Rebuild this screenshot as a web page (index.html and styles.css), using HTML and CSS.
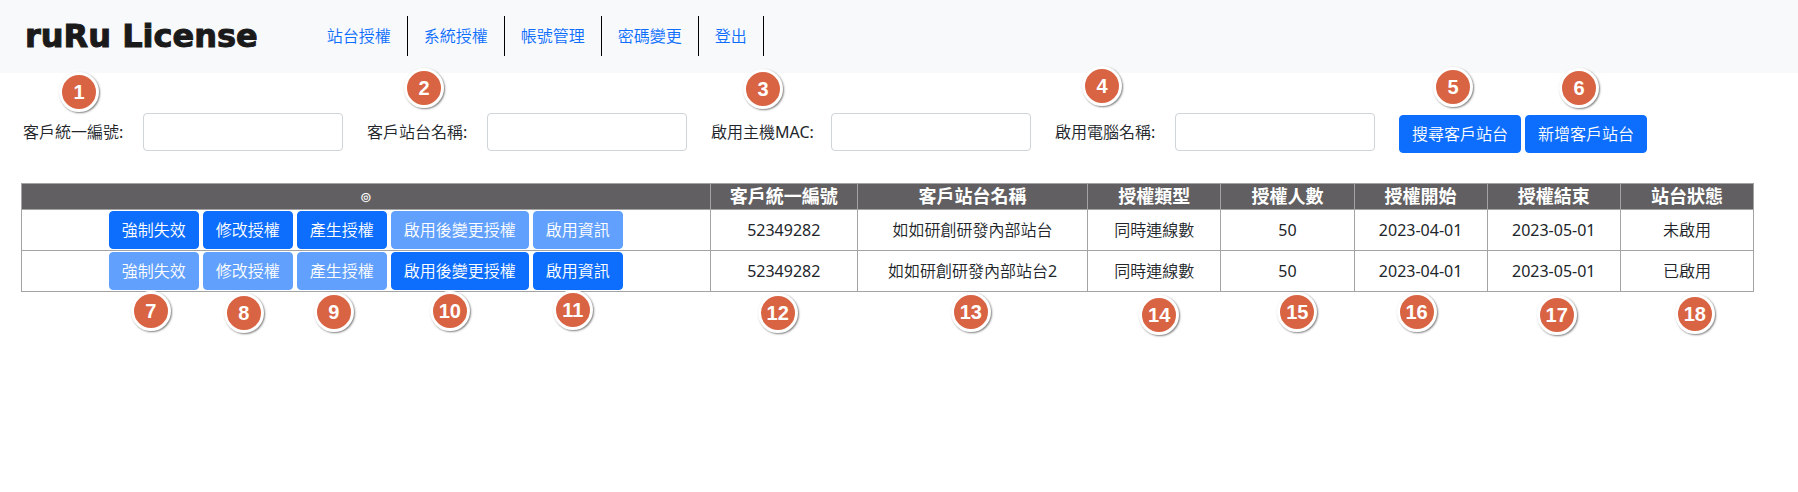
FILE: index.html
```html
<!DOCTYPE html>
<html lang="zh-Hant">
<head>
<meta charset="utf-8">
<meta name="viewport" content="width=device-width, initial-scale=1">
<title>ruRu License</title>
<link rel="stylesheet" href="styles.css">
</head>
<body>
<header class="topbar">
  <h1 class="brand">ruRu License</h1>
  <nav class="nav">
    <a class="nav-link" href="#">站台授權</a>
    <a class="nav-link" href="#">系統授權</a>
    <a class="nav-link" href="#">帳號管理</a>
    <a class="nav-link" href="#">密碼變更</a>
    <a class="nav-link" href="#">登出</a>
  </nav>
</header>
<main class="content">
  <form class="search">
    <div class="field"><label class="field-label" for="tax-id">客戶統一編號:</label><input class="field-input" id="tax-id" type="text"><span class="marker marker-1">1</span></div>
    <div class="field"><label class="field-label" for="site-name">客戶站台名稱:</label><input class="field-input" id="site-name" type="text"><span class="marker marker-2">2</span></div>
    <div class="field"><label class="field-label" for="host-mac">啟用主機MAC:</label><input class="field-input" id="host-mac" type="text"><span class="marker marker-3">3</span></div>
    <div class="field"><label class="field-label" for="pc-name">啟用電腦名稱:</label><input class="field-input" id="pc-name" type="text"><span class="marker marker-4">4</span></div>
    <div class="actions search-actions">
      <span class="slot"><button class="btn" type="button">搜尋客戶站台</button><span class="marker marker-5">5</span></span>
      <span class="slot"><button class="btn" type="button">新增客戶站台</button><span class="marker marker-6">6</span></span>
    </div>
  </form>
  <table class="sites">
    <colgroup>
      <col class="col-actions"><col class="col-id"><col class="col-name"><col><col><col><col><col>
    </colgroup>
    <thead>
      <tr><th class="mark">⊚</th><th>客戶統一編號</th><th>客戶站台名稱</th><th>授權類型</th><th>授權人數</th><th>授權開始</th><th>授權結束</th><th>站台狀態</th></tr>
    </thead>
    <tbody>
      <tr>
        <td>
          <div class="actions">
            <button class="btn" type="button">強制失效</button>
            <button class="btn" type="button">修改授權</button>
            <button class="btn" type="button">產生授權</button>
            <button class="btn" type="button" disabled>啟用後變更授權</button>
            <button class="btn" type="button" disabled>啟用資訊</button>
          </div>
        </td>
        <td>52349282</td><td>如如研創研發內部站台</td><td>同時連線數</td><td>50</td><td>2023-04-01</td><td>2023-05-01</td><td>未啟用</td>
      </tr>
      <tr>
        <td>
          <div class="actions">
            <span class="slot"><button class="btn" type="button" disabled>強制失效</button><span class="marker marker-7">7</span></span>
            <span class="slot"><button class="btn" type="button" disabled>修改授權</button><span class="marker marker-8">8</span></span>
            <span class="slot"><button class="btn" type="button" disabled>產生授權</button><span class="marker marker-9">9</span></span>
            <span class="slot"><button class="btn" type="button">啟用後變更授權</button><span class="marker marker-10">10</span></span>
            <span class="slot"><button class="btn" type="button">啟用資訊</button><span class="marker marker-11">11</span></span>
          </div>
        </td>
        <td>52349282<span class="marker marker-12">12</span></td>
        <td>如如研創研發內部站台2<span class="marker marker-13">13</span></td>
        <td>同時連線數<span class="marker marker-14">14</span></td>
        <td>50<span class="marker marker-15">15</span></td>
        <td>2023-04-01<span class="marker marker-16">16</span></td>
        <td>2023-05-01<span class="marker marker-17">17</span></td>
        <td>已啟用<span class="marker marker-18">18</span></td>
      </tr>
    </tbody>
  </table>
</main>
</body>
</html>
```
FILE: styles.css
```css
*, *::before, *::after { box-sizing: border-box; }

body {
  min-height: 100vh;
  margin: 0;
  background: #fff;
  color: #212529;
  font: 400 16px/24px "Noto Sans", "Noto Sans CJK TC DemiLight", "Noto Sans CJK TC", sans-serif;
}

.topbar {
  display: flex;
  align-items: center;
  gap: 53px;
  padding: 16px 25px 17px;
  background: #f8f9fb;
}

.brand {
  margin: 0;
  color: #1a1a1a;
  font: 700 32px/40px "DejaVu Sans", sans-serif;
  -webkit-text-stroke: 1px #1a1a1a;
}

.nav { display: flex; }

.nav-link {
  padding: 8px 16px;
  border-right: 1px solid #000;
  color: #0d6efd;
  text-decoration: none;
}

.content { padding: 40px 44px 60px 21px; }

.search {
  display: flex;
  flex-wrap: wrap;
  align-items: flex-start;
  gap: 24px;
  padding-left: 2px;
}

.field {
  position: relative;
  display: grid;
  grid-template-columns: 120px 200px;
  align-items: center;
}

.field-input {
  width: 100%;
  height: 38px;
  padding: 6px 12px;
  border: 1px solid #ced4da;
  border-radius: 4px;
  background: #fff;
  font: inherit;
}

.actions {
  display: flex;
  justify-content: center;
  gap: 4px;
}

.search-actions { padding-top: 2px; }

.slot {
  position: relative;
  display: flex;
}

.btn {
  padding: 6px 12px;
  border: 1px solid #0d6efd;
  border-radius: 4px;
  background: #0d6efd;
  color: #fff;
  font: inherit;
  white-space: nowrap;
}

.btn:disabled { opacity: 0.65; }

.sites {
  width: 100%;
  margin-top: 30px;
  border-collapse: collapse;
  table-layout: fixed;
  text-align: center;
}

.col-actions { width: 39.76%; }
.col-id { width: 8.5%; }
.col-name { width: 13.3%; }

.sites th,
.sites td {
  position: relative;
  padding: 1px;
  border: 1px solid #a3a3a3;
}

.sites th {
  padding: 0;
  background: #625f62;
  color: #fff;
  font-family: "Noto Sans", "Noto Sans CJK TC", sans-serif;
  font-size: 18px;
  font-weight: 700;
  line-height: 25px;
}

.sites .mark {
  font-size: 14px;
  font-weight: 400;
}

.marker {
  position: absolute;
  z-index: 1;
  width: 40px;
  height: 40px;
  border: 3px solid #fff;
  border-radius: 50%;
  background: #d96444;
  box-shadow: 1px 1px 2px rgba(0, 0, 0, 0.5);
  color: #fff;
  font: 700 20px/34px "Liberation Sans", Arial, sans-serif;
  text-align: center;
}

.marker-1 { left: 36px; top: -41px; }
.marker-2 { left: 37px; top: -45px; }
.marker-3 { left: 32px; top: -44px; }
.marker-4 { left: 27px; top: -47px; }
.marker-5 { left: 34px; top: -48px; }
.marker-6 { left: 34px; top: -47px; }
.marker-7 { left: 22px; top: 39px; }
.marker-8 { left: 21px; top: 41px; }
.marker-9 { left: 17px; top: 40px; }
.marker-10 { left: 39px; top: 39px; }
.marker-11 { left: 20px; top: 38px; }
.marker-12 { left: 47px; top: 42px; }
.marker-13 { left: 93px; top: 41px; }
.marker-14 { left: 51px; top: 44px; }
.marker-15 { left: 56px; top: 41px; }
.marker-16 { left: 42px; top: 41px; }
.marker-17 { left: 49px; top: 44px; }
.marker-18 { left: 54px; top: 43px; }
```
